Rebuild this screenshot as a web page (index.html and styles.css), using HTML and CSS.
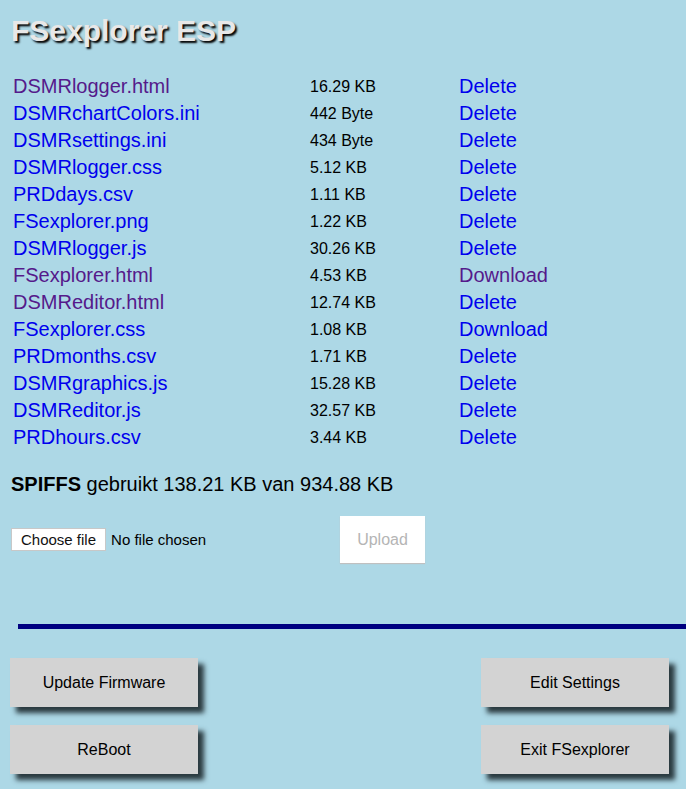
FILE: index.html
```html
<!DOCTYPE html>
<html>
<head>
<meta charset="utf-8">
<title>FSexplorer ESP</title>
<link rel="stylesheet" href="styles.css">
</head>
<body>
<h1 class="title">FSexplorer ESP</h1>
<table class="files">
  <tr><td class="name visited">DSMRlogger.html</td><td class="size">16.29 KB</td><td class="act">Delete</td></tr>
  <tr><td class="name">DSMRchartColors.ini</td><td class="size">442 Byte</td><td class="act">Delete</td></tr>
  <tr><td class="name">DSMRsettings.ini</td><td class="size">434 Byte</td><td class="act">Delete</td></tr>
  <tr><td class="name">DSMRlogger.css</td><td class="size">5.12 KB</td><td class="act">Delete</td></tr>
  <tr><td class="name">PRDdays.csv</td><td class="size">1.11 KB</td><td class="act">Delete</td></tr>
  <tr><td class="name">FSexplorer.png</td><td class="size">1.22 KB</td><td class="act">Delete</td></tr>
  <tr><td class="name">DSMRlogger.js</td><td class="size">30.26 KB</td><td class="act">Delete</td></tr>
  <tr><td class="name visited">FSexplorer.html</td><td class="size">4.53 KB</td><td class="act visited">Download</td></tr>
  <tr><td class="name visited">DSMReditor.html</td><td class="size">12.74 KB</td><td class="act">Delete</td></tr>
  <tr><td class="name">FSexplorer.css</td><td class="size">1.08 KB</td><td class="act">Download</td></tr>
  <tr><td class="name">PRDmonths.csv</td><td class="size">1.71 KB</td><td class="act">Delete</td></tr>
  <tr><td class="name">DSMRgraphics.js</td><td class="size">15.28 KB</td><td class="act">Delete</td></tr>
  <tr><td class="name">DSMReditor.js</td><td class="size">32.57 KB</td><td class="act">Delete</td></tr>
  <tr><td class="name">PRDhours.csv</td><td class="size">3.44 KB</td><td class="act">Delete</td></tr>
</table>
<p class="usage"><b>SPIFFS</b> gebruikt 138.21 KB van 934.88 KB</p>
<div class="upload-row">
  <div class="picker"><span class="choose">Choose file</span><span class="nofile">No file chosen</span></div>
  <span class="upload">Upload</span>
</div>
<div class="rule"></div>
<div class="actions">
  <div class="btn">Update Firmware</div>
  <div class="btn">Edit Settings</div>
  <div class="btn">ReBoot</div>
  <div class="btn">Exit FSexplorer</div>
</div>
</body>
</html>
```
FILE: styles.css
```css
html, body {
  margin: 0;
  padding: 0;
}
body {
  background: #add8e6;
  font-family: "Liberation Sans", Arial, sans-serif;
  color: #000;
  padding: 0 0 0 10px;
  overflow: hidden;
  height: 789px;
}
.title {
  margin: 0;
  padding-top: 13px;
  padding-left: 1px;
  font-size: 30px;
  line-height: 35px;
  font-weight: bold;
  color: #e8e8e8;
  text-shadow: 2px 2px 2px #000;
}
.files {
  margin-top: 24px;
  border-spacing: 2px;
  margin-left: 0;
}
.files td {
  padding: 1px 1px;
  height: 23px;
  line-height: 23px;
  white-space: nowrap;
}
.name {
  font-size: 20px;
  color: #0000ee;
  width: 293px;
}
.size {
  font-size: 16px;
  width: 145px;
}
.act {
  font-size: 20px;
  color: #0000ee;
}
.visited {
  color: #551a8b;
}
.usage {
  margin: 20px 0 0 1px;
  font-size: 20px;
  line-height: 24px;
}
.upload-row {
  display: flex;
  align-items: center;
  margin-top: 19px;
  height: 48px;
}
.picker {
  display: flex;
  align-items: center;
  width: 330px;
  font-size: 15px;
}
.choose {
  background: #fff;
  border: 1px solid #c8c8c8;
  padding: 0 9px;
  height: 21px;
  line-height: 21px;
  margin-left: 1px;
  color: #111;
}
.nofile {
  margin-left: 5px;
}
.upload {
  background: #fff;
  width: 85px;
  height: 47px;
  line-height: 47px;
  text-align: center;
  color: #b5b5b5;
  font-size: 16px;
  box-shadow: 0 1px 1px #c0c0c0;
}
.rule {
  margin: 61px 0 0 8px;
  height: 5px;
  background: #000080;
}
.actions {
  display: grid;
  grid-template-columns: 188px 188px;
  justify-content: space-between;
  row-gap: 18px;
  margin: 29px 17px 0 0;
}
.btn {
  background: #d3d3d3;
  height: 49px;
  line-height: 49px;
  text-align: center;
  font-size: 16px;
  box-shadow: 6px 6px 5px #2a3a40;
}
```
